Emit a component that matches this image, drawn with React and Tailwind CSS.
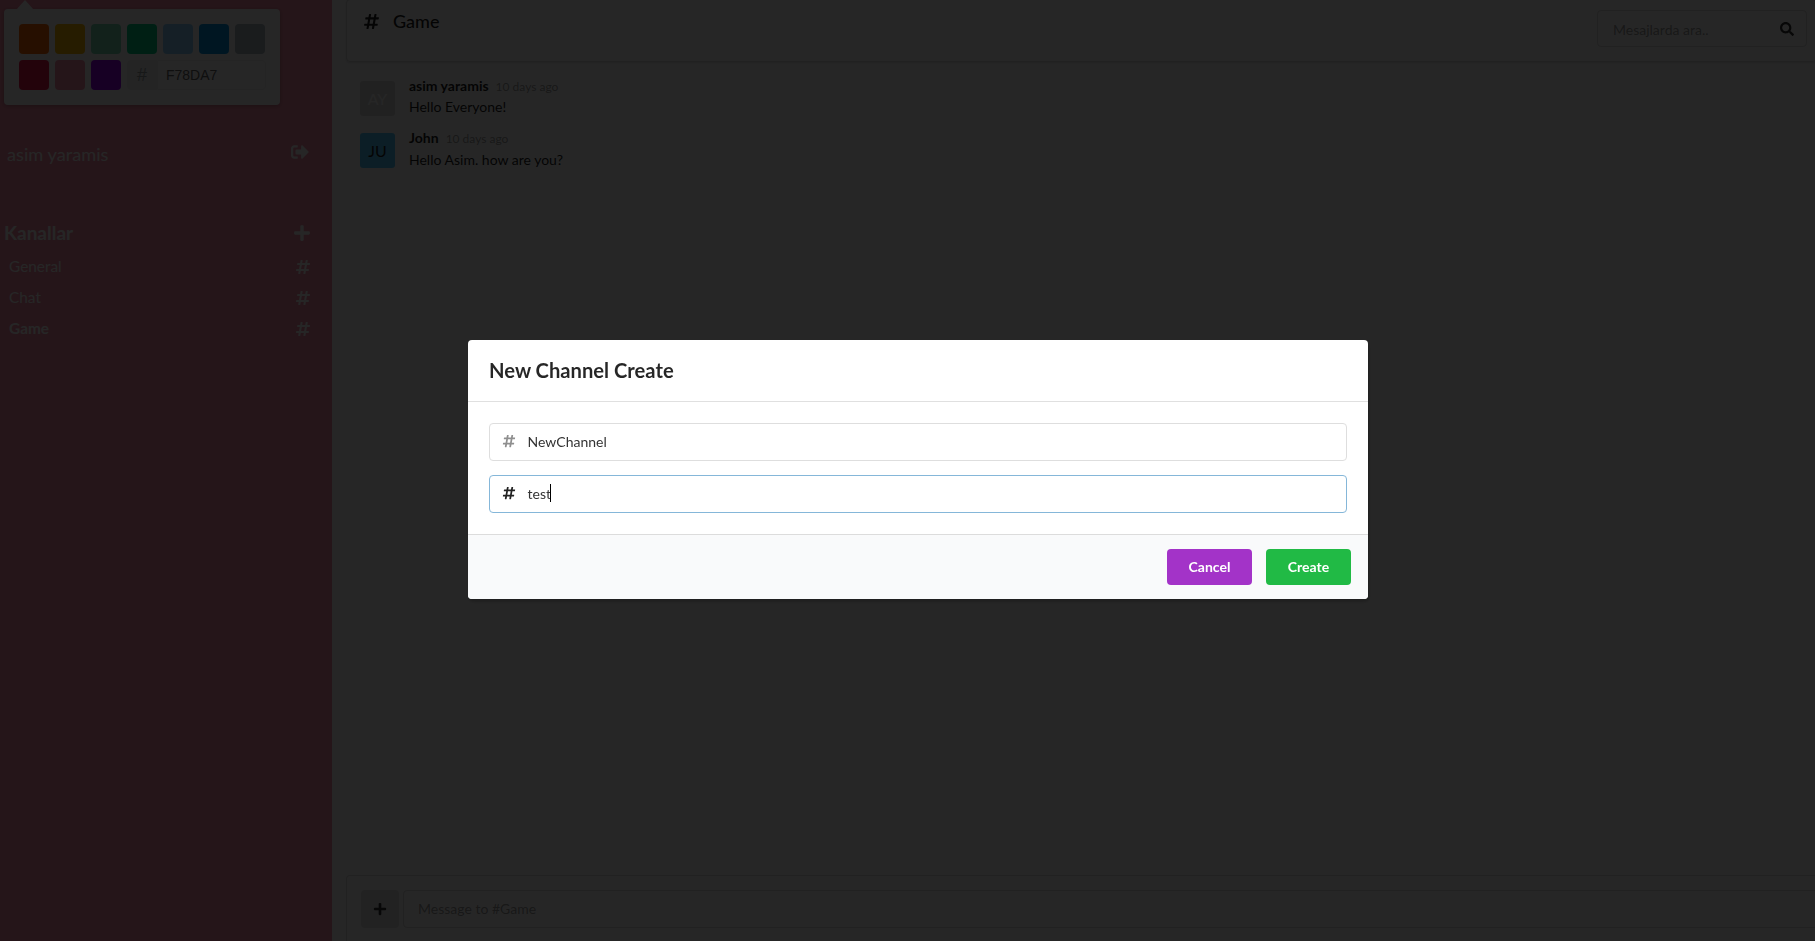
import { FaHashtag, FaPlus, FaSearch, FaSignOutAlt } from "react-icons/fa";

const swatches = ["#FF6900", "#FCB900", "#7BDCB5", "#00D084", "#8ED1FC", "#0693E3", "#ABB8C3", "#EB144C", "#F78DA7", "#9900EF"];

const channels = [
    { name: "General", active: false },
    { name: "Chat", active: false },
    { name: "Game", active: true },
];

function ColorPicker() {
    return (
        <div className="absolute top-[9px] left-[4px] w-[276px] bg-white rounded shadow-[0_1px_4px_rgba(0,0,0,0.25)]">
            <div className="absolute -top-[9px] left-[12px] w-0 h-0 border-x-[9px] border-b-[10px] border-x-transparent border-b-white"></div>
            <div className="flex flex-wrap gap-[6px] pt-[15px] pr-[9px] pb-[15px] pl-[15px]">
                {swatches.map((color) => (
                    <div key={color} className="w-[30px] h-[30px] rounded" style={{ backgroundColor: color }}></div>
                ))}
                <div className="flex">
                    <div className="w-[30px] h-[30px] bg-[#F0F0F0] rounded-l flex items-center justify-center text-[#98A1A4] text-[18px] font-['Liberation_Sans',sans-serif]">#</div>
                    <div className="w-[109px] h-[30px] pl-2 leading-[28px] text-[14px] text-[#666] border border-[#F0F0F0] rounded-r font-['Liberation_Sans',sans-serif]">F78DA7</div>
                </div>
            </div>
        </div>
    );
}

function Sidebar() {
    return (
        <aside className="relative w-[332px] shrink-0 bg-[#F78DA7] text-white">
            <ColorPicker />
            <div className="pt-[142px] pl-[7px] pr-[23px] flex items-center justify-between h-[166px]">
                <span className="text-[18.2px] leading-6">asim yaramis</span>
                <FaSignOutAlt className="text-[18px] mb-[4px]" />
            </div>
            <div className="mt-[55px] pl-[4px] pr-[21px] flex items-center justify-between h-6">
                <span className="text-[19px] font-bold">Kanallar</span>
                <FaPlus className="text-[18px]" />
            </div>
            <ul className="mt-[6px] pl-[9px] pr-[21px]">
                {channels.map((channel) => (
                    <li key={channel.name} className={`flex items-center justify-between h-[31px] text-[15.4px] ${channel.active ? "font-bold" : ""}`}>
                        <span>{channel.name}</span>
                        <FaHashtag className="text-[16px]" />
                    </li>
                ))}
            </ul>
        </aside>
    );
}

function Comment({ initials, avatar, author, text }) {
    return (
        <div className="flex gap-[13px] h-[35px]">
            <div className={`w-[35px] h-[35px] rounded-[3px] flex items-center justify-center text-[16px] ${avatar}`}>{initials}</div>
            <div className="pl-px text-[14px] leading-[20.4px] text-[#1f1f1f] -mt-[5px]">
                <div>
                    <span className="font-bold">{author}</span>
                    <span className="ml-[7px] text-[12px] text-black/40">10 days ago</span>
                </div>
                <div>{text}</div>
            </div>
        </div>
    );
}

function ChatPanel() {
    return (
        <main className="flex-1 min-w-0 flex flex-col bg-white pl-[14px]">
            <header className="h-[63px] -mt-[1px] -mr-[2px] flex justify-between border border-black/15 rounded shadow-[0_1px_2px_rgba(34,36,38,0.15)]">
                <div className="flex items-center gap-[13px] pl-[16px] h-[42px] text-[18px] font-medium text-[#1f1f1f]">
                    <FaHashtag className="text-[17px]" />
                    <span>Game</span>
                </div>
                <div className="mt-[10px] mr-[9px] w-[210px] h-[37px] flex items-center justify-between pl-[15px] pr-[12px] border border-black/15 rounded text-[14px] text-black/40">
                    <span className="pt-px">Mesajlarda ara..</span>
                    <FaSearch className="text-[14px] text-[#333]" />
                </div>
            </header>
            <section className="flex-1 flex flex-col gap-[17.4px] pt-[19px] pl-[14px]">
                <Comment initials="AY" avatar="bg-[#dddddd] text-white" author="asim yaramis" text="Hello Everyone!" />
                <Comment initials="JU" avatar="bg-[#54c8ff] text-[#1f1f1f]" author="John" text="Hello Asim. how are you?" />
            </section>
            <footer className="h-[66px] -mr-[20px] flex gap-[4px] pt-[14px] pl-[14px] border border-black/15 border-b-0 rounded-t">
                <div className="w-[38px] h-[38px] bg-[#e0e1e2] rounded flex items-center justify-center text-[#333]">
                    <FaPlus className="text-[14px]" />
                </div>
                <div className="flex-1 h-[38px] pl-[14px] border border-black/15 rounded leading-[36px] text-[14px] text-black/40">Message to #Game</div>
            </footer>
        </main>
    );
}

function NewChannelModal() {
    return (
        <div className="fixed inset-0 bg-black/85 flex items-center justify-center pl-[21px] pb-[2px]">
            <div className="w-[900px] h-[259px] bg-white rounded-[4px] flex flex-col text-black/85 shadow-[1px_3px_3px_rgba(0,0,0,0.2)]">
                <div className="h-[62px] px-[21px] flex items-center text-[20.2px] font-bold leading-none border-b border-[#e0e0e0]">New Channel Create</div>
                <div className="flex-1 flex flex-col gap-[14px] pt-[21px] px-[21px]">
                    <div className="h-[38px] pb-[2px] flex items-center border border-[#dedede] rounded text-[14px] text-[#333]">
                        <span className="w-[37.5px] flex justify-center text-[#8f8f8f]"><FaHashtag className="text-[14px]" /></span>
                        <span>NewChannel</span>
                    </div>
                    <div className="h-[38px] pb-[2px] flex items-center border border-[#85b7d9] rounded text-[14px] text-[#333]">
                        <span className="w-[37.5px] flex justify-center text-[#222]"><FaHashtag className="text-[14px]" /></span>
                        <span>test</span>
                        <span className="w-px h-[18px] -ml-[1px] bg-black"></span>
                    </div>
                </div>
                <div className="h-[65px] flex items-center justify-end gap-[14px] pr-[17px] bg-[#f9fafb] border-t border-[#dcdcdc] rounded-b-[4px] text-white text-[14px] font-bold">
                    <button className="w-[85px] h-[36px] pb-px rounded bg-[#a333c8]">Cancel</button>
                    <button className="w-[85px] h-[36px] pb-px rounded bg-[#21ba45]">Create</button>
                </div>
            </div>
        </div>
    );
}

export default function App() {
    return (
        <div className="relative flex h-screen overflow-hidden font-['Lato',sans-serif]">
            <Sidebar />
            <ChatPanel />
            <NewChannelModal />
        </div>
    );
}
